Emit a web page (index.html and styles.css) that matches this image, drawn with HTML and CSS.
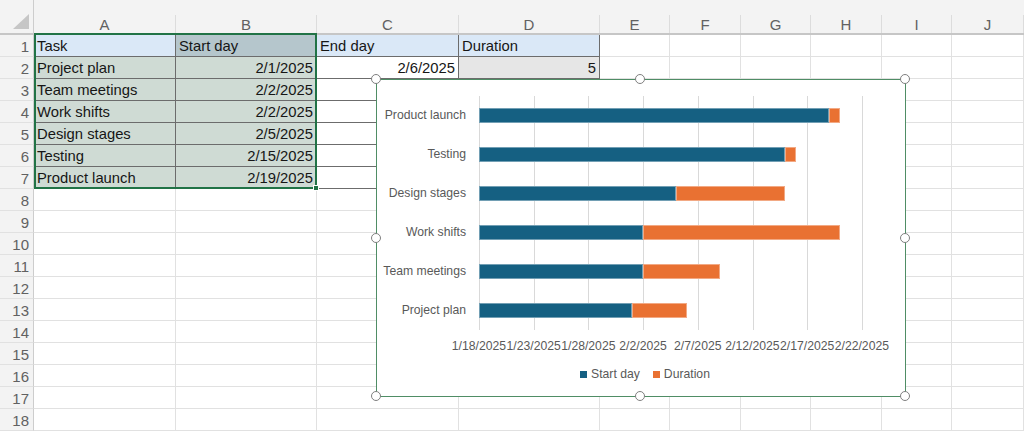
FILE: index.html
```html
<!DOCTYPE html>
<html>
<head>
<meta charset="utf-8">
<link rel="stylesheet" href="styles.css">
</head>
<body>
<div class="sheet">
  <div class="corner"><svg width="20" height="20" viewBox="0 0 20 20"><polygon points="1,17 17,17 17,2" fill="#c6c6c6"/></svg></div>
  <div class="ch"><span>A</span></div><div class="ch"><span>B</span></div><div class="ch"><span>C</span></div><div class="ch"><span>D</span></div><div class="ch"><span>E</span></div><div class="ch"><span>F</span></div><div class="ch"><span>G</span></div><div class="ch"><span>H</span></div><div class="ch"><span>I</span></div><div class="ch"><span>J</span></div>

  <div class="rh">1</div><div class="c t hd">Task</div><div class="c t hs">Start day</div><div class="c t hd">End day</div><div class="c t hd">Duration</div><div class="c"></div><div class="c"></div><div class="c"></div><div class="c"></div><div class="c"></div><div class="c"></div>
  <div class="rh">2</div><div class="c t dt">Project plan</div><div class="c t dt r">2/1/2025</div><div class="c t r">2/6/2025</div><div class="c t gy r">5</div><div class="c"></div><div class="c"></div><div class="c"></div><div class="c"></div><div class="c"></div><div class="c"></div>
  <div class="rh">3</div><div class="c t dt">Team meetings</div><div class="c t dt r">2/2/2025</div><div class="c t"></div><div class="c"></div><div class="c"></div><div class="c"></div><div class="c"></div><div class="c"></div><div class="c"></div><div class="c"></div>
  <div class="rh">4</div><div class="c t dt">Work shifts</div><div class="c t dt r">2/2/2025</div><div class="c t"></div><div class="c"></div><div class="c"></div><div class="c"></div><div class="c"></div><div class="c"></div><div class="c"></div><div class="c"></div>
  <div class="rh">5</div><div class="c t dt">Design stages</div><div class="c t dt r">2/5/2025</div><div class="c t"></div><div class="c"></div><div class="c"></div><div class="c"></div><div class="c"></div><div class="c"></div><div class="c"></div><div class="c"></div>
  <div class="rh">6</div><div class="c t dt">Testing</div><div class="c t dt r">2/15/2025</div><div class="c t"></div><div class="c"></div><div class="c"></div><div class="c"></div><div class="c"></div><div class="c"></div><div class="c"></div><div class="c"></div>
  <div class="rh">7</div><div class="c t dt">Product launch</div><div class="c t dt r">2/19/2025</div><div class="c t"></div><div class="c"></div><div class="c"></div><div class="c"></div><div class="c"></div><div class="c"></div><div class="c"></div><div class="c"></div>
  <div class="rh">8</div><div class="c"></div><div class="c"></div><div class="c"></div><div class="c"></div><div class="c"></div><div class="c"></div><div class="c"></div><div class="c"></div><div class="c"></div><div class="c"></div>
  <div class="rh">9</div><div class="c"></div><div class="c"></div><div class="c"></div><div class="c"></div><div class="c"></div><div class="c"></div><div class="c"></div><div class="c"></div><div class="c"></div><div class="c"></div>
  <div class="rh">10</div><div class="c"></div><div class="c"></div><div class="c"></div><div class="c"></div><div class="c"></div><div class="c"></div><div class="c"></div><div class="c"></div><div class="c"></div><div class="c"></div>
  <div class="rh">11</div><div class="c"></div><div class="c"></div><div class="c"></div><div class="c"></div><div class="c"></div><div class="c"></div><div class="c"></div><div class="c"></div><div class="c"></div><div class="c"></div>
  <div class="rh">12</div><div class="c"></div><div class="c"></div><div class="c"></div><div class="c"></div><div class="c"></div><div class="c"></div><div class="c"></div><div class="c"></div><div class="c"></div><div class="c"></div>
  <div class="rh">13</div><div class="c"></div><div class="c"></div><div class="c"></div><div class="c"></div><div class="c"></div><div class="c"></div><div class="c"></div><div class="c"></div><div class="c"></div><div class="c"></div>
  <div class="rh">14</div><div class="c"></div><div class="c"></div><div class="c"></div><div class="c"></div><div class="c"></div><div class="c"></div><div class="c"></div><div class="c"></div><div class="c"></div><div class="c"></div>
  <div class="rh">15</div><div class="c"></div><div class="c"></div><div class="c"></div><div class="c"></div><div class="c"></div><div class="c"></div><div class="c"></div><div class="c"></div><div class="c"></div><div class="c"></div>
  <div class="rh">16</div><div class="c"></div><div class="c"></div><div class="c"></div><div class="c"></div><div class="c"></div><div class="c"></div><div class="c"></div><div class="c"></div><div class="c"></div><div class="c"></div>
  <div class="rh">17</div><div class="c"></div><div class="c"></div><div class="c"></div><div class="c"></div><div class="c"></div><div class="c"></div><div class="c"></div><div class="c"></div><div class="c"></div><div class="c"></div>
  <div class="rh">18</div><div class="c"></div><div class="c"></div><div class="c"></div><div class="c"></div><div class="c"></div><div class="c"></div><div class="c"></div><div class="c"></div><div class="c"></div><div class="c"></div>

  <div class="selection"></div>
  <div class="fill-handle"></div>

  <div class="chart">
    <div class="chart-body">
      <div class="cats">
        <div>Product launch</div>
        <div>Testing</div>
        <div>Design stages</div>
        <div>Work shifts</div>
        <div>Team meetings</div>
        <div>Project plan</div>
      </div>
      <div class="plot">
        <div class="gridlines"><i></i><i></i><i></i><i></i><i></i><i></i><i></i></div>
        <div class="bars">
          <div class="bar"><b class="s" style="width:350.2px"></b><b class="d" style="width:10.9px"></b></div>
          <div class="bar"><b class="s" style="width:306.4px"></b><b class="d" style="width:10.9px"></b></div>
          <div class="bar"><b class="s" style="width:197px"></b><b class="d" style="width:109.4px"></b></div>
          <div class="bar"><b class="s" style="width:164.1px"></b><b class="d" style="width:197px"></b></div>
          <div class="bar"><b class="s" style="width:164.1px"></b><b class="d" style="width:76.6px"></b></div>
          <div class="bar"><b class="s" style="width:153.2px"></b><b class="d" style="width:54.7px"></b></div>
        </div>
      </div>
    </div>
    <div class="axis"><span>1/18/2025</span><span>1/23/2025</span><span>1/28/2025</span><span>2/2/2025</span><span>2/7/2025</span><span>2/12/2025</span><span>2/17/2025</span><span>2/22/2025</span></div>
    <div class="legend">
      <span class="item"><i class="key s"></i>Start day</span>
      <span class="item"><i class="key d"></i>Duration</span>
    </div>
    <span class="handle h-tl"></span><span class="handle h-tm"></span><span class="handle h-tr"></span>
    <span class="handle h-ml"></span><span class="handle h-mr"></span>
    <span class="handle h-bl"></span><span class="handle h-bm"></span><span class="handle h-br"></span>
  </div>
</div>
</body>
</html>
```
FILE: styles.css
```css
* { box-sizing: border-box; margin: 0; padding: 0; }
html, body { width: 1024px; height: 431px; overflow: hidden; background: #fff; }
body { font-family: "Liberation Sans", Arial, sans-serif; }

.sheet {
  position: relative;
  display: grid;
  grid-template-columns: 34px 142px 141px 142px 141px 70px 71px 70px 71px 70px 72px;
  grid-template-rows: 35px repeat(18, 22px);
}

.corner {
  background: #f3f3f3;
  border-right: 1px solid #cdcdcd;
  border-bottom: 2px solid #c6c6c6;
  display: flex;
  align-items: flex-end;
  justify-content: flex-end;
  padding: 0 1px 1px 0;
}

.ch {
  background: #f3f3f3;
  border-bottom: 2px solid #c6c6c6;
  display: flex;
  align-items: flex-end;
}
.ch span {
  flex: 1;
  height: 18px;
  border-right: 1px solid #dcdcdc;
  text-align: center;
  font-size: 15px;
  line-height: 20px;
  color: #616161;
}

.rh {
  background: #f3f3f3;
  border-right: 1px solid #cdcdcd;
  border-bottom: 1px solid #e1e1e1;
  text-align: right;
  padding-right: 4px;
  font-size: 15px;
  line-height: 23px;
  color: #616161;
  overflow: hidden;
}

.c {
  border-right: 1px solid #e1e1e1;
  border-bottom: 1px solid #e1e1e1;
  font-size: 14.8px;
  line-height: 23px;
  padding: 0 3px;
  color: #161616;
  white-space: nowrap;
  overflow: hidden;
}
.c.t { border-color: #6c6c6c; }
.r { text-align: right; }
.hd { background: #dae8f7; }
.hs { background: #b5c6cc; }
.dt { background: #cfdbd4; }
.gy { background: #e6e6e6; }

.selection {
  position: absolute;
  left: 34px;
  top: 33px;
  width: 283px;
  height: 156px;
  border: 2px solid #217346;
  pointer-events: none;
}
.fill-handle {
  position: absolute;
  left: 313px;
  top: 185px;
  width: 6px;
  height: 6px;
  background: #217346;
  border: 1px solid #fff;
}

/* chart */
.chart {
  position: absolute;
  left: 376px;
  top: 79px;
  width: 530px;
  height: 318px;
  border: 1px solid #4f8d65;
  background: #fff;
  padding-top: 16px;
  color: #595959;
  font-size: 12.2px;
}
.chart-body { display: flex; }
.cats {
  width: 102px;
  padding-right: 13px;
  display: flex;
  flex-direction: column;
}
.cats div {
  height: 39px;
  line-height: 39px;
  text-align: right;
  white-space: nowrap;
}
.plot {
  width: 384px;
  height: 234px;
  display: grid;
}
.plot > * { grid-area: 1 / 1; }
.gridlines {
  display: grid;
  grid-template-columns: repeat(7, 1fr);
  border-left: 1px solid #d9d9d9;
}
.gridlines i { border-right: 1px solid #d9d9d9; }
.bars { display: flex; flex-direction: column; }
.bar { height: 39px; display: flex; align-items: center; }
.bar b {
  display: block;
  height: 15px;
  border: 1px solid rgba(255, 255, 255, 0.4);
}
.s { background: #156082; }
.d { background: #e97132; }

.axis {
  display: flex;
  margin-left: 74.6px;
  margin-top: 8px;
  height: 16px;
  line-height: 16px;
}
.axis span {
  flex: none;
  width: 54.71px;
  text-align: center;
  white-space: nowrap;
}

.legend {
  display: flex;
  justify-content: center;
  align-items: center;
  gap: 13px;
  margin-top: 12px;
  padding-left: 8px;
  height: 16px;
}
.legend .item { display: flex; align-items: center; gap: 4px; }
.legend .key { display: block; width: 7px; height: 7px; }

.handle {
  position: absolute;
  width: 10px;
  height: 10px;
  border-radius: 50%;
  border: 1.5px solid #7f7f7f;
  background: #fff;
}
.h-tl { left: -6px; top: -6px; }
.h-tm { left: 258px; top: -6px; }
.h-tr { left: 523px; top: -6px; }
.h-ml { left: -6px; top: 153px; }
.h-mr { left: 523px; top: 153px; }
.h-bl { left: -6px; top: 311px; }
.h-bm { left: 258px; top: 311px; }
.h-br { left: 523px; top: 311px; }
```
